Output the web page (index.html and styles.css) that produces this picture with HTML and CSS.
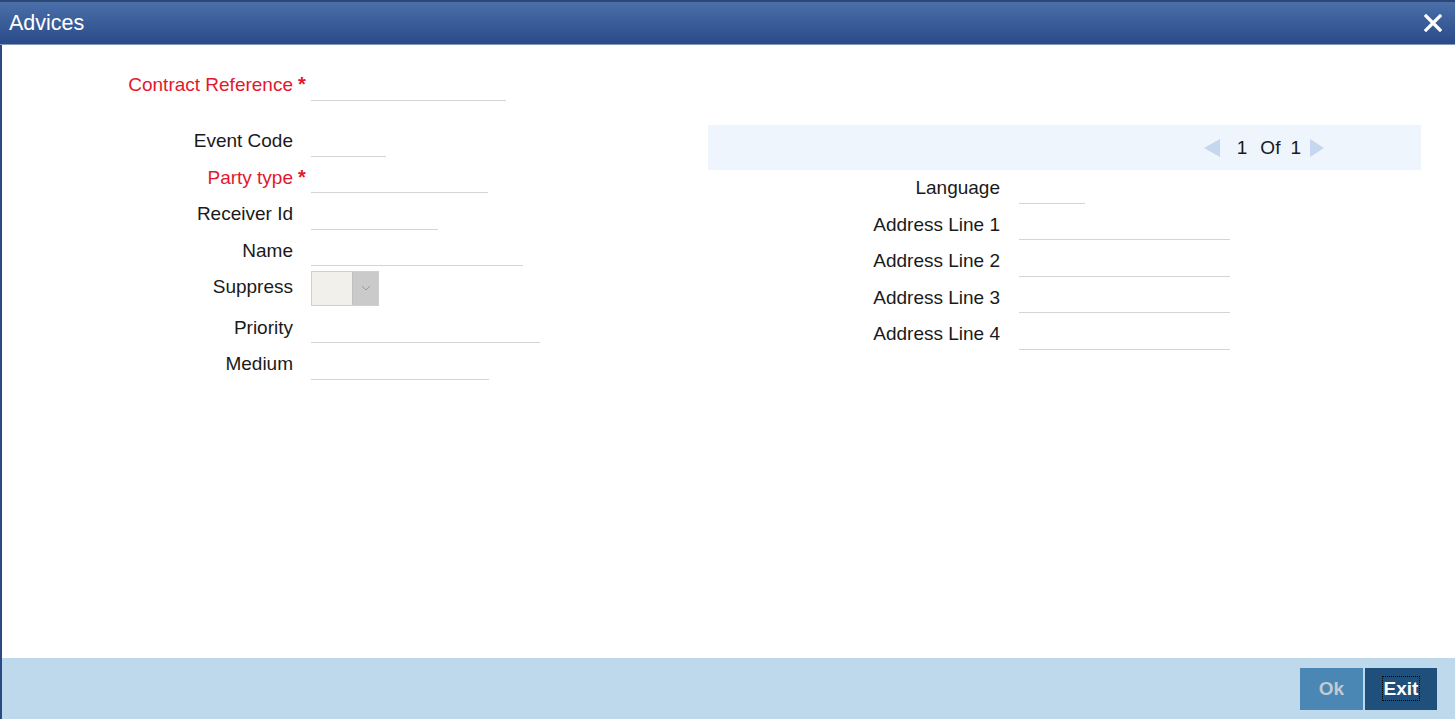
FILE: index.html
```html
<!DOCTYPE html>
<html lang="en">
<head>
    <meta charset="UTF-8">
    <title>Advices</title>
    <link rel="stylesheet" href="styles.css">
</head>
<body>
    <div class="window">
        <div class="title-bar">
            <span class="title">Advices</span>
            <button class="close-btn" aria-label="Close">
                <svg width="18" height="18" viewBox="0 0 18 18">
                    <path d="M2 2 L16 16 M16 2 L2 16" stroke="#fff" stroke-width="3.2" stroke-linecap="square"/>
                </svg>
            </button>
        </div>

        <div class="content">
            <div class="col col-left">
                <div class="row row-main">
                    <label class="lbl required">Contract Reference</label>
                    <span class="star">*</span>
                    <input class="field w-contract" type="text">
                </div>

                <div class="row">
                    <label class="lbl">Event Code</label>
                    <span class="star"></span>
                    <input class="field w-event" type="text">
                </div>
                <div class="row">
                    <label class="lbl required">Party type</label>
                    <span class="star">*</span>
                    <input class="field w-party" type="text">
                </div>
                <div class="row">
                    <label class="lbl">Receiver Id</label>
                    <span class="star"></span>
                    <input class="field w-receiver" type="text">
                </div>
                <div class="row">
                    <label class="lbl">Name</label>
                    <span class="star"></span>
                    <input class="field w-name" type="text">
                </div>
                <div class="row row-select">
                    <label class="lbl">Suppress</label>
                    <span class="star"></span>
                    <div class="select-box">
                        <span class="select-value"></span>
                        <span class="select-arrow">
                            <svg width="10" height="6" viewBox="0 0 10 6">
                                <path d="M1 1 L5 5 L9 1" fill="none" stroke="#9a9a9a" stroke-width="1"/>
                            </svg>
                        </span>
                    </div>
                </div>
                <div class="row">
                    <label class="lbl">Priority</label>
                    <span class="star"></span>
                    <input class="field w-priority" type="text">
                </div>
                <div class="row">
                    <label class="lbl">Medium</label>
                    <span class="star"></span>
                    <input class="field w-medium" type="text">
                </div>
            </div>

            <div class="col col-right">
                <div class="pager">
                    <span class="arrow arrow-left"></span>
                    <span class="page-num">1</span>
                    <span class="page-of">Of</span>
                    <span class="page-total">1</span>
                    <span class="arrow arrow-right"></span>
                </div>

                <div class="row">
                    <label class="lbl lbl-right">Language</label>
                    <span class="star"></span>
                    <input class="field w-language" type="text">
                </div>
                <div class="row">
                    <label class="lbl lbl-right">Address Line 1</label>
                    <span class="star"></span>
                    <input class="field w-address" type="text">
                </div>
                <div class="row">
                    <label class="lbl lbl-right">Address Line 2</label>
                    <span class="star"></span>
                    <input class="field w-address" type="text">
                </div>
                <div class="row">
                    <label class="lbl lbl-right">Address Line 3</label>
                    <span class="star"></span>
                    <input class="field w-address" type="text">
                </div>
                <div class="row">
                    <label class="lbl lbl-right">Address Line 4</label>
                    <span class="star"></span>
                    <input class="field w-address" type="text">
                </div>
            </div>
        </div>

        <div class="footer">
            <button class="btn btn-ok">Ok</button>
            <button class="btn btn-exit"><span class="focus-ring">Exit</span></button>
        </div>
    </div>
</body>
</html>
```

FILE: styles.css
```css
/* Base styles */
html, body {
    margin: 0;
    padding: 0;
    height: 100%;
}

body {
    font-family: 'Liberation Sans', Arial, sans-serif;
    background-color: #fff;
    color: #1a1a1a;
    overflow: hidden;
}

.window {
    display: flex;
    flex-direction: column;
    height: 100vh;
}

/* Title bar */
.title-bar {
    display: flex;
    justify-content: space-between;
    align-items: center;
    height: 42px;
    padding: 0 13px 0 9px;
    border-top: 2px solid #2c4676;
    border-bottom: 1px solid #8598b8;
    background: linear-gradient(to bottom, #4b6fa9 0%, #3a5d99 50%, #2a4a8a 100%);
}

.title {
    color: #fff;
    font-size: 21.5px;
}

.close-btn {
    background: none;
    border: none;
    padding: 0;
    width: 18px;
    height: 18px;
    display: flex;
    cursor: pointer;
}

/* Content */
.content {
    flex: 1;
    display: flex;
    border-left: 2px solid #2b4a84;
}

.col-left {
    width: 706px;
    padding-top: 22px;
}

.col-right {
    width: 713px;
    padding-top: 80px;
}

.row {
    display: flex;
    align-items: center;
    height: 36.5px;
}

.row-main {
    height: 36px;
    margin-bottom: 20px;
}

.row-select {
    margin-bottom: 4px;
}

.lbl {
    width: 291px;
    text-align: right;
    font-size: 19px;
    color: #1a1a1a;
}

.lbl-right {
    width: 292px;
}

.lbl.required {
    color: #e3182d;
}

.star {
    width: 18px;
    padding-left: 5px;
    box-sizing: border-box;
    align-self: flex-start;
    margin-top: 6px;
    color: #e3182d;
    font-size: 20px;
    font-weight: bold;
}

.col-right .star {
    width: 19px;
}

.field {
    height: 29px;
    padding: 0;
    margin: 1px 0 0 0;
    border: none;
    border-bottom: 1px solid #d4d4d4;
    background: transparent;
    font-family: inherit;
    font-size: 16px;
    outline: none;
    box-sizing: content-box;
}

.w-contract { width: 195px; }
.w-event { width: 75px; }
.w-party { width: 177px; }
.w-receiver { width: 127px; }
.w-name { width: 212px; }
.w-priority { width: 229px; }
.w-medium { width: 178px; }
.w-language { width: 66px; }
.w-address { width: 211px; }

/* Select box */
.select-box {
    display: flex;
    width: 66px;
    height: 33px;
    margin-top: 2px;
    border: 1px solid #cfcfcf;
}

.select-value {
    flex: 1;
    background-color: #f1f0eb;
}

.select-arrow {
    width: 25px;
    display: flex;
    align-items: center;
    justify-content: center;
    background-color: #cacaca;
    border-left: 1px solid #c0c0c0;
}

/* Pager bar */
.pager {
    display: flex;
    justify-content: flex-end;
    align-items: center;
    height: 45px;
    padding-right: 97px;
    background-color: #eef5fd;
    font-size: 19px;
}

.arrow {
    width: 0;
    height: 0;
    border-top: 9px solid transparent;
    border-bottom: 9px solid transparent;
}

.arrow-left {
    border-right: 16px solid #c5d7ee;
    margin-right: 17px;
}

.arrow-right {
    border-left: 14px solid #c5d7ee;
    margin-left: 9px;
}

.page-of {
    margin: 0 10px 0 13px;
}

/* Footer */
.footer {
    display: flex;
    justify-content: flex-end;
    align-items: center;
    gap: 2px;
    height: 61px;
    padding-right: 18px;
    border-left: 2px solid #2b4a84;
    background-color: #bed9ec;
}

.btn {
    height: 42px;
    border: none;
    font-family: inherit;
    font-size: 19px;
    font-weight: bold;
    cursor: pointer;
}

.btn-ok {
    width: 63px;
    background-color: #4a87b5;
    color: #c2cad3;
}

.btn-exit {
    width: 72px;
    background-color: #1f507b;
    color: #fff;
}

.focus-ring {
    padding: 1px 1px;
    outline: 1px dotted #000;
}
```
